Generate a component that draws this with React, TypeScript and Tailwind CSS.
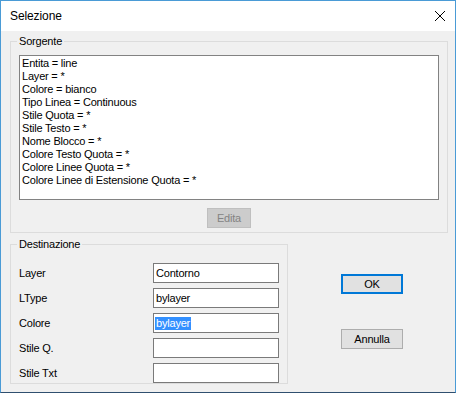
const sourceLines = [
  "Entita = line",
  "Layer = *",
  "Colore = bianco",
  "Tipo Linea = Continuous",
  "Stile Quota = *",
  "Stile Testo = *",
  "Nome Blocco = *",
  "Colore Testo Quota = *",
  "Colore Linee Quota = *",
  "Colore Linee di Estensione Quota = *",
];

const fields = [
  { label: "Layer", value: "Contorno" },
  { label: "LType", value: "bylayer" },
  { label: "Colore", value: "bylayer", selected: true },
  { label: "Stile Q.", value: "" },
  { label: "Stile Txt", value: "" },
];

export default function App() {
  return (
    <div className="w-[456px] h-[393px] flex flex-col border border-[#4a9bd6] border-b-[#2f4f6f] bg-[#f0f0f0] font-['Liberation_Sans',Arial,sans-serif] text-[11px] leading-[13px] tracking-[-0.2px] text-black">
      {/* title bar */}
      <div className="h-[30px] shrink-0 bg-white flex items-center justify-between pl-[9px] pr-[10px]">
        <span className="text-[12px] tracking-[-0.1px]">Selezione</span>
        <svg width="10" height="10" viewBox="0 0 10 10">
          <path d="M0 0 L10 10 M10 0 L0 10" stroke="#000" strokeWidth="1" />
        </svg>
      </div>

      <div className="flex-1 pl-[9px] pr-[7px] pt-[4px]">
        <fieldset className="border border-[#dcdcdc] px-[8px] pb-[4px]">
          <legend className="-ml-[2px] px-[2px]">Sorgente</legend>
          <div className="mt-[7px] h-[145px] bg-white border border-[#828282] pl-[2px] pt-[1px]">
            {sourceLines.map((l) => (
              <div key={l} className="h-[13px] whitespace-nowrap">{l}</div>
            ))}
          </div>
          <div className="flex justify-center mt-[8px]">
            <button className="w-[44px] h-[20px] bg-[#cccccc] border border-[#bfbfbf] text-[#838383]">
              Edita
            </button>
          </div>
        </fieldset>

        <div className="flex mt-[5px]">
          <fieldset className="w-[278px] border border-[#dcdcdc] px-[8px] pb-0">
            <legend className="-ml-[2px] px-[2px]">Destinazione</legend>
            <div className="mt-[12px] flex flex-col gap-[5px]">
              {fields.map((f) => (
                <div key={f.label} className="flex items-center justify-between">
                  <span>{f.label}</span>
                  <div className="w-[126px] h-[20px] bg-white border border-[#7a7a7a] flex items-center pl-[1px]">
                    {f.selected ? (
                      <span className="bg-[#3390ff] text-white px-[1px]">{f.value}</span>
                    ) : (
                      <span className="px-[1px]">{f.value}</span>
                    )}
                  </div>
                </div>
              ))}
            </div>
          </fieldset>

          <div className="ml-[53px] pt-[36px] flex flex-col gap-[35px]">
            <button className="w-[62px] h-[20px] bg-[#e1e1e1] border-2 border-[#0078d7]">OK</button>
            <button className="w-[62px] h-[20px] bg-[#e1e1e1] border border-[#adadad]">Annulla</button>
          </div>
        </div>
      </div>
    </div>
  );
}
